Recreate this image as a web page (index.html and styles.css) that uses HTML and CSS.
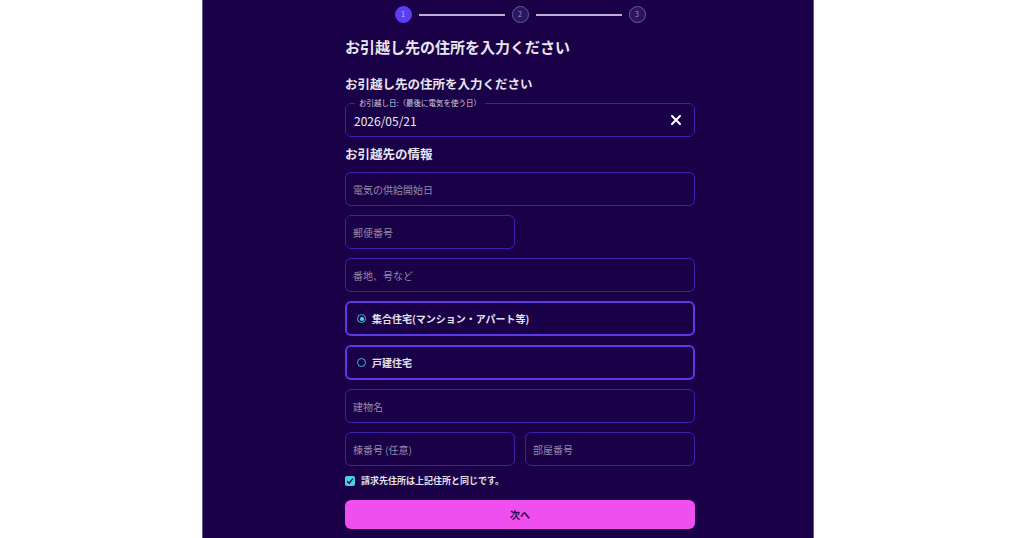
FILE: index.html
```html
<!DOCTYPE html>
<html lang="ja">
<head>
    <meta charset="UTF-8">
    <meta name="viewport" content="width=device-width, initial-scale=1.0">
    <title>お引越し先の住所</title>
    <link rel="stylesheet" href="styles.css">
</head>
<body>
    <div class="panel">
        <div class="content">
            <!-- ステップ表示 -->
            <div class="stepper">
                <span class="step active">1</span>
                <span class="step_line"></span>
                <span class="step">2</span>
                <span class="step_line"></span>
                <span class="step">3</span>
            </div>

            <h1 class="title">お引越し先の住所を入力ください</h1>

            <h2 class="subtitle">お引越し先の住所を入力ください</h2>
            <div class="field field_date">
                <span class="legend">お引越し日:（最後に電気を使う日）</span>
                <span class="value">2026/05/21</span>
                <svg class="clear" width="12" height="12" viewBox="0 0 12 12">
                    <path d="M2 2L10 10M10 2L2 10" stroke="#fff" stroke-width="2" stroke-linecap="round"/>
                </svg>
            </div>

            <h2 class="subtitle sub2">お引越先の情報</h2>
            <div class="form">
                <div class="field"><span class="ph">電気の供給開始日</span></div>
                <div class="row">
                    <div class="field"><span class="ph">郵便番号</span></div>
                    <div></div>
                </div>
                <div class="field"><span class="ph">番地、号など</span></div>
                <label class="field radio">
                    <span class="radio_mark checked"></span>
                    <span>集合住宅(マンション・アパート等)</span>
                </label>
                <label class="field radio">
                    <span class="radio_mark"></span>
                    <span>戸建住宅</span>
                </label>
                <div class="field"><span class="ph">建物名</span></div>
                <div class="row">
                    <div class="field"><span class="ph">棟番号 (任意)</span></div>
                    <div class="field"><span class="ph">部屋番号</span></div>
                </div>
            </div>

            <label class="check">
                <span class="check_box">
                    <svg width="8" height="8" viewBox="0 0 8 8">
                        <path d="M1.2 4.2L3.2 6.2L6.8 1.6" fill="none" stroke="#1a0046" stroke-width="1.4"/>
                    </svg>
                </span>
                <span>請求先住所は上記住所と同じです。</span>
            </label>

            <button class="next">次へ</button>
        </div>
    </div>
</body>
</html>
```

FILE: styles.css
```css
*{
    margin: 0;
    padding: 0;
    box-sizing: border-box;
}
body{
    background: #fff;
    font-family: "Noto Sans CJK JP", "Noto Sans", sans-serif;
    color: #e9e6f2;
}
.panel{
    width: 612px;
    min-height: 538px;
    margin-left: 202px;
    background: #1a0046;
    border-left: 1px solid #6a5a94;
    border-right: 1px solid #6a5a94;
}
.content{
    width: 350px;
    margin-left: 142px;
    padding-top: 6px;
}
.stepper{
    display: flex;
    align-items: center;
    justify-content: center;
    gap: 7px;
}
.step{
    width: 17px;
    height: 17px;
    border-radius: 50%;
    border: 1px solid #6c5a98;
    background: #2c1560;
    color: #9a8cc0;
    font-size: 7px;
    line-height: 15px;
    text-align: center;
}
.step.active{
    background: #5b3ff5;
    border-color: #5b3ff5;
    color: #c8c0ff;
}
.step_line{
    width: 86px;
    height: 2px;
    background: #b8b0d0;
}
.title{
    font-size: 15px;
    font-weight: bold;
    line-height: 20px;
    margin-top: 14px;
}
.subtitle{
    font-size: 12.5px;
    font-weight: bold;
    line-height: 18px;
    margin-top: 18px;
}
.sub2{
    margin-top: 8px;
}
.field{
    position: relative;
    height: 34px;
    border: 1.5px solid #3b20b2;
    border-radius: 6px;
    display: flex;
    align-items: center;
    padding: 0 7px;
    font-size: 10px;
}
.field_date{
    margin-top: 10px;
    padding: 0 10px 0 8px;
    justify-content: space-between;
}
.field_date .legend{
    position: absolute;
    top: -7px;
    left: 9px;
    padding: 0 4px;
    background: #1a0046;
    font-size: 7.5px;
    line-height: 12px;
    color: #d4d0e2;
}
.field_date .value{
    font-size: 12px;
    color: #eeeaf6;
}
.clear{
    margin-right: 2px;
}
.form{
    display: flex;
    flex-direction: column;
    gap: 9px;
    margin-top: 9px;
}
.ph{
    color: #928ca9;
}
.row{
    display: grid;
    grid-template-columns: 1fr 1fr;
    gap: 10px;
}
.radio{
    height: 35px;
    border: 2px solid #5a3be6;
    padding: 0 10px;
    gap: 6px;
    font-weight: bold;
    color: #e4e0ee;
}
.radio_mark{
    width: 9px;
    height: 9px;
    border-radius: 50%;
    border: 1.5px solid #3fb8cc;
    display: flex;
    align-items: center;
    justify-content: center;
}
.radio_mark.checked::after{
    content: "";
    width: 4px;
    height: 4px;
    border-radius: 50%;
    background: #4fd8e8;
}
.check{
    display: flex;
    align-items: center;
    gap: 6px;
    margin-top: 8px;
    font-size: 9px;
    font-weight: bold;
    color: #e4e0ee;
}
.check_box{
    width: 10px;
    height: 10px;
    border-radius: 2px;
    background: #46d2e2;
    display: flex;
    align-items: center;
    justify-content: center;
}
.next{
    display: block;
    width: 100%;
    height: 29px;
    margin-top: 13px;
    border: none;
    border-radius: 6px;
    background: #f04ff0;
    color: #2a0a40;
    font-family: "Noto Sans CJK JP", "Noto Sans", sans-serif;
    font-size: 10px;
    font-weight: bold;
}
```
